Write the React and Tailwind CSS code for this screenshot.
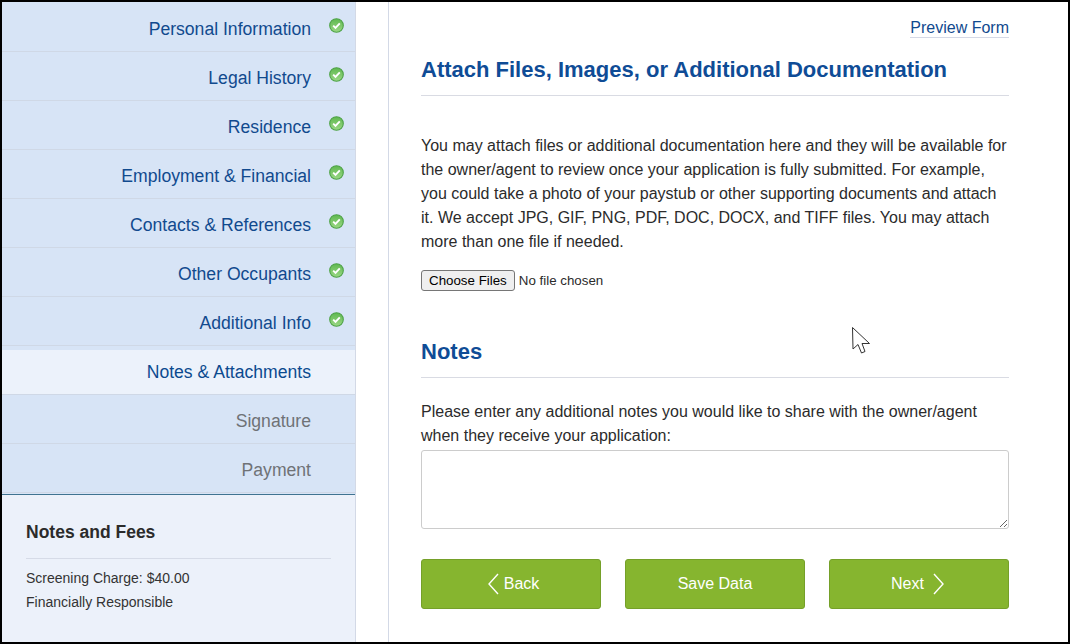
const items = [
  { label: "Personal Information", done: true },
  { label: "Legal History", done: true },
  { label: "Residence", done: true },
  { label: "Employment & Financial", done: true },
  { label: "Contacts & References", done: true },
  { label: "Other Occupants", done: true },
  { label: "Additional Info", done: true },
];

function Check({ first }) {
  return (
    <svg width="15" height="15" viewBox="0 0 15 15" className={`absolute left-[327px] ${first ? "top-[16px]" : "top-[15px]"}`}>
      <defs>
        <linearGradient id="g" x1="0" y1="0" x2="0" y2="1">
          <stop offset="0" stopColor="#5fb84f" />
          <stop offset="1" stopColor="#9bd886" />
        </linearGradient>
      </defs>
      <circle cx="7.5" cy="7.5" r="6.8" fill="url(#g)" stroke="#4ea347" strokeWidth="1.1" />
      <path d="M4.2 7.7 L6.5 10 L10.8 5.4" fill="none" stroke="#ffffff" strokeWidth="1.9" />
    </svg>
  );
}

function NavRow({ label, done, muted, first }) {
  return (
    <div className={`relative flex items-center justify-end pr-[44px] border-b border-[#cfd8e6] bg-[#d7e4f6] text-[17.6px] ${first ? "h-[50px]" : "h-[49px]"} ${muted ? "text-[#6f7276]" : "text-[#114a8e]"}`}>
      <span className={first ? "relative top-[3px]" : "relative top-[2px]"}>{label}</span>
      {done && <Check first={first} />}
    </div>
  );
}

function Chevron({ right }) {
  return (
    <svg width="13" height="22" viewBox="0 0 13 22" fill="none" stroke="#ffffff" strokeWidth="1.4">
      <path d={right ? "M2 1 L11 11 L2 21" : "M11 1 L2 11 L11 21"} />
    </svg>
  );
}

function GreenButton({ children, extra }) {
  return (
    <button className={`w-[180px] h-[50px] flex items-center justify-center ${extra} rounded-[3px] bg-[#86b52f] border border-[#75a029] text-white text-[16px]`}>
      {children}
    </button>
  );
}

export default function App() {
  return (
    <div className="relative w-[1070px] h-[644px] border-2 border-black bg-white flex overflow-hidden font-['Liberation_Sans',Arial,sans-serif] text-[#2b2b2b]">
      <aside className="w-[354px] shrink-0 border-r border-[#d3d9e6] bg-[#ecf1fa] flex flex-col">
        <NavRow {...items[0]} first />
        {items.slice(1).map((it) => (
          <NavRow key={it.label} {...it} />
        ))}
        <div className="h-[4px] bg-[#d7e4f6]" />
        <div className="h-[45px] pr-[44px] flex items-center justify-end border-b border-[#cfd8e6] bg-[#ecf2fb] text-[17.6px] text-[#0b4a8f]">
          Notes &amp; Attachments
        </div>
        <NavRow label="Signature" muted />
        <NavRow label="Payment" muted />
        <div className="h-[2px] bg-[#d7e4f6] -mt-[1px]" />
        <div className="flex-1 border-t border-[#3f7391] pt-[25px] px-[24px]">
          <h3 className="text-[17.5px] leading-[24px] font-bold text-[#2b2b2b]">Notes and Fees</h3>
          <div className="mt-[14px] border-t border-[#d6dbe7] w-[305px]" />
          <p className="mt-[7px] text-[14px] leading-[24px] text-[#333333]">Screening Charge: $40.00</p>
          <p className="text-[14px] leading-[24px] text-[#333333]">Financially Responsible</p>
        </div>
      </aside>

      <div className="w-[32px] shrink-0" />

      <main className="flex-1 border-l border-[#d3d9e6] pl-[32px] pr-[59px] pt-[16px]">
        <div className="flex justify-end">
          <a className="text-[16px] leading-[19px] text-[#114a8e] border-b border-[#d5d9e6]">Preview Form</a>
        </div>
        <h2 className="mt-[17px] text-[22px] leading-[30px] font-bold text-[#0f4c96]">
          Attach Files, Images, or Additional Documentation
        </h2>
        <div className="mt-[10px] border-t border-[#d9dbe3]" />
        <p className="mt-[38px] text-[16px] leading-[24px] text-[#2b2b2b]">
          You may attach files or additional documentation here and they will be available for
          the owner/agent to review once your application is fully submitted. For example,
          you could take a photo of your paystub or other supporting documents and attach
          it. We accept JPG, GIF, PNG, PDF, DOC, DOCX, and TIFF files. You may attach
          more than one file if needed.
        </p>
        <input
          type="file"
          multiple
          className="block mt-[16px] w-[300px] h-[21px] text-[13.33px] leading-[19px] text-[#2b2b2b] file:h-[21px] file:mr-[4px] file:px-[7px] file:bg-[#efefef] file:border file:border-[#767676] file:rounded-[3px] file:text-black"
        />
        <h2 className="mt-[46px] text-[22px] leading-[30px] font-bold text-[#0f4c96]">Notes</h2>
        <div className="mt-[10px] border-t border-[#d9dbe3]" />
        <p className="mt-[22px] text-[16px] leading-[24px] text-[#2b2b2b]">
          Please enter any additional notes you would like to share with the owner/agent
          when they receive your application:
        </p>
        <textarea className="block mt-[2px] w-full h-[79px] border border-[#cccccc] rounded-[3px] bg-white" />
        <div className="mt-[30px] flex justify-between">
          <GreenButton extra="gap-[4px] pl-[4px]">
            <Chevron />
            <span>Back</span>
          </GreenButton>
          <GreenButton extra="gap-0">Save Data</GreenButton>
          <GreenButton extra="gap-[8px] pr-[2px]">
            <span>Next</span>
            <Chevron right />
          </GreenButton>
        </div>
      </main>

      <svg width="20" height="29" viewBox="0 0 20 29" className="absolute left-[848px] top-[323px]" fill="#ffffff" stroke="#333333" strokeWidth="1">
        <path d="M2.5 2.5 L3 24 L8 19.5 L11.5 28 L15 26.5 L12 18.5 L19.5 18.5 Z" />
      </svg>
    </div>
  );
}
